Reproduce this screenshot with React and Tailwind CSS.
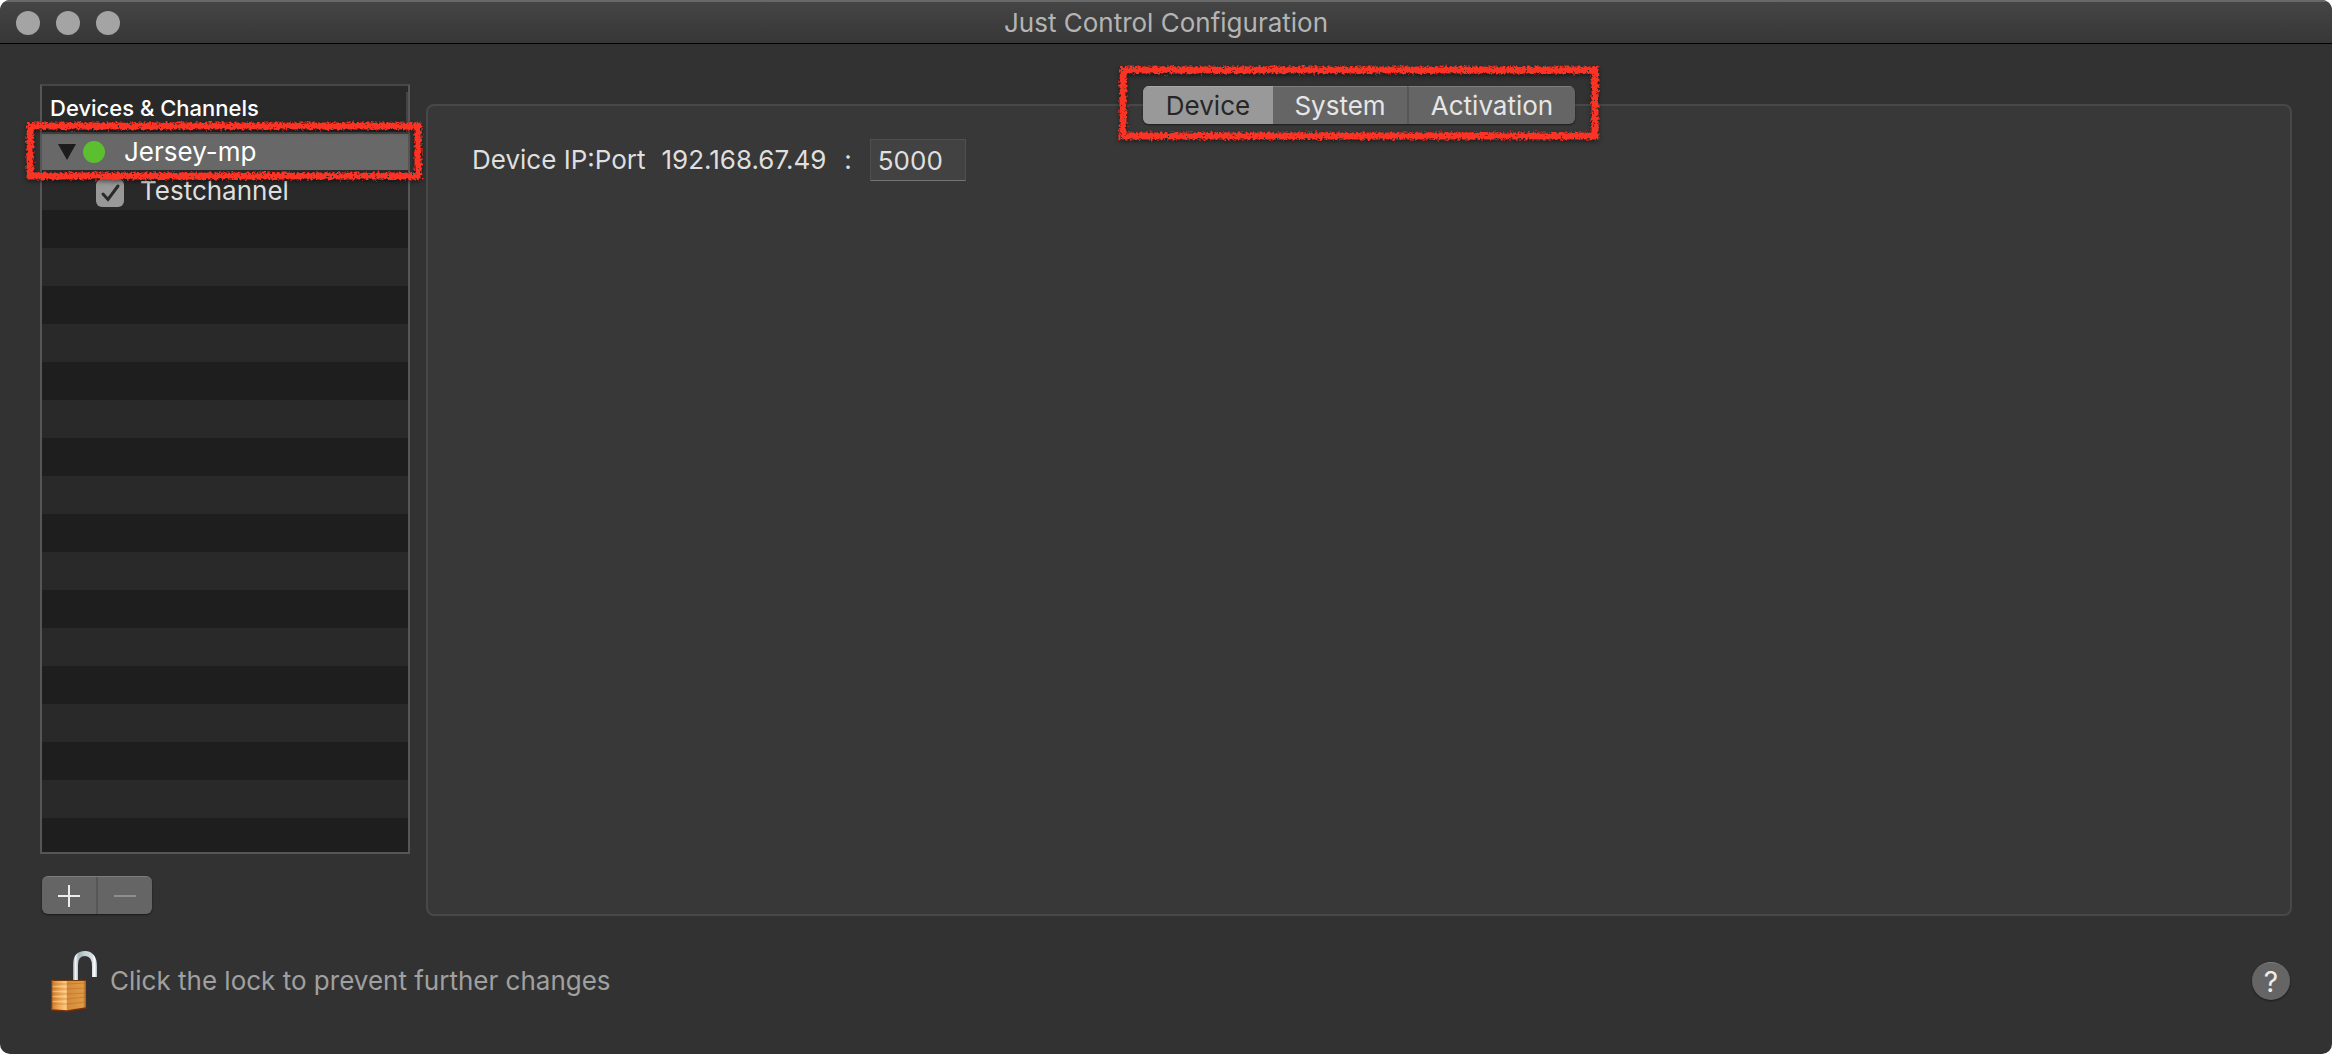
import { useState } from 'react';
import clsx from 'clsx';

const TABS = [
    { name: 'Device', width: 'w-[130px]' },
    { name: 'System', width: 'w-[134px]' },
    { name: 'Activation', width: 'w-[168px] border-l-2 border-l-[#565656]' },
];

const EMPTY_ROWS = Array.from({ length: 17 }, (_, i) => i);

// Rough crayon outline laid over whatever its parent holds
const Marker = ({ id, className }) => (
    <svg className={clsx('pointer-events-none absolute z-20 overflow-visible drop-shadow-[0_2px_2px_rgba(0,0,0,0.5)]', className)} aria-hidden="true">
        <defs>
            <filter id={id} filterUnits="userSpaceOnUse" x="-12" y="-12" width="520" height="120" colorInterpolationFilters="sRGB">
                <feTurbulence type="fractalNoise" baseFrequency="0.4" numOctaves="2" seed="4" result="noise" />
                <feDisplacementMap in="SourceGraphic" in2="noise" scale="6" xChannelSelector="R" yChannelSelector="G" result="rough" />
                <feColorMatrix in="noise" type="matrix" values="0 0 0 0 0  0 0 0 0 0  0 0 0 0 0  0 0 -10 0 8" result="holes" />
                <feComposite in="rough" in2="holes" operator="in" />
            </filter>
        </defs>
        <rect width="100%" height="100%" fill="none" stroke="#fb3324" strokeWidth="7" filter={`url(#${id})`} />
    </svg>
);

const LockIcon = () => (
    <svg className="h-[62px] w-12" viewBox="0 0 48 62" aria-hidden="true">
        <defs>
            <linearGradient id="brassFront">
                <stop offset="0" stopColor="#cf8030" />
                <stop offset="0.4" stopColor="#eda552" />
                <stop offset="0.9" stopColor="#fbc880" />
                <stop offset="1" stopColor="#f0b060" />
            </linearGradient>
            <linearGradient id="brassSide">
                <stop offset="0" stopColor="#d48a3a" />
                <stop offset="0.85" stopColor="#e09a45" />
                <stop offset="1" stopColor="#a45c1c" />
            </linearGradient>
            <linearGradient id="steel" gradientUnits="userSpaceOnUse" x1="23" x2="47" y1="0" y2="0">
                <stop offset="0" stopColor="#8b979d" />
                <stop offset="0.1" stopColor="#f6f9fa" />
                <stop offset="0.24" stopColor="#a5b3ba" />
                <stop offset="0.5" stopColor="#c6d1d6" />
                <stop offset="0.8" stopColor="#d3dce0" />
                <stop offset="0.9" stopColor="#ffffff" />
                <stop offset="1" stopColor="#a7b4bb" />
            </linearGradient>
        </defs>
        <path d="M25.500 31V15C25.500 7 29 3.500 35 3.500S44.500 8 44.500 16V27" fill="none" stroke="url(#steel)" strokeWidth="5" />
        <path d="M2 30H17V61L2 60Z" fill="url(#brassFront)" />
        <path d="M17 30H36V58L17 61Z" fill="url(#brassSide)" />
        <path d="M2 34H17L36 33M2 39H17L36 38M2 44H17L36 43M2 49H17L36 47M2 54H17L36 52" fill="none" stroke="#a8601d" strokeOpacity="0.4" />
        <path d="M2 36.500H17M2 41.500H17M2 46.500H17M2 51.500H17" stroke="#ffd998" strokeOpacity="0.5" />
        <path d="M2 30.500H36" stroke="#6e3a0c" />
        <path d="M2 60L17 61L36 58" fill="none" stroke="#7c2f08" strokeWidth="1.500" />
        <path d="M2 30V60" stroke="#a3581a" />
    </svg>
);

const App = () => {
    const [tab, setTab] = useState('Device');
    const [port, setPort] = useState('5000');
    const [enabled, setEnabled] = useState(true);

    return (
        <div className="min-h-screen bg-white font-['Inter','Liberation_Sans',sans-serif]">
            <div className="flex min-h-screen flex-col overflow-hidden rounded-[10px] bg-[#323232] text-[26px] leading-[38px] text-[#dfdfdf]">
                <header className="grid h-11 grid-cols-[1fr_auto_1fr] items-center border-t-2 border-b border-t-[#686868] border-b-black bg-linear-to-b from-[#454545] to-[#373737] px-4">
                    <div className="flex gap-4">
                        <button aria-label="Close" className="size-6 rounded-full bg-[#a4a4a4]" />
                        <button aria-label="Minimize" className="size-6 rounded-full bg-[#a4a4a4]" />
                        <button aria-label="Zoom" className="size-6 rounded-full bg-[#a4a4a4]" />
                    </div>
                    <h1 className="text-[#b4b4b4]">Just Control Configuration</h1>
                </header>

                <main className="flex flex-1 gap-4 px-10 pt-10">
                    <aside className="w-[370px] shrink-0">
                        <div className="border-2 border-[#565656] border-t-[#464646] bg-[#292929]">
                            <div className="flex h-12 justify-between border-b-2 border-[#454545]">
                                <h2 className="pt-[3px] pl-2 text-[22px] font-medium text-white">Devices &amp; Channels</h2>
                                <span className="mt-1.5 w-0.5 bg-[#444444]" />
                            </div>
                            <ul>
                                <li className="relative mb-0.5 flex h-9 items-center bg-[#686868] pl-4 text-white">
                                    <button aria-label="Collapse Jersey-mp">
                                        <svg className="h-4 w-[18px]" viewBox="0 0 18 16" aria-hidden="true">
                                            <path d="M0 0H18L9 16Z" fill="#1c1c1c" />
                                        </svg>
                                    </button>
                                    <span className="ml-[7px] size-[22px] rounded-full bg-[#5bbf30]" />
                                    <span className="ml-[19px]">Jersey-mp</span>
                                    <Marker id="markDevice" className="-top-2 -left-3 h-[50px] w-[388px]" />
                                </li>
                                <li>
                                    <label className="flex h-[38px] items-center pl-[54px]">
                                        <span className="mt-1 grid size-7">
                                            <input
                                                type="checkbox"
                                                className="col-start-1 row-start-1 size-7 appearance-none rounded-md bg-[#989898]"
                                                checked={enabled}
                                                onChange={() => setEnabled(!enabled)}
                                            />
                                            {enabled && (
                                                <svg className="pointer-events-none z-10 col-start-1 row-start-1 size-7" viewBox="0 0 28 28" aria-hidden="true">
                                                    <path d="M7 15L12 20.500L22 7" fill="none" stroke="#2a2a2a" strokeWidth="3" strokeLinecap="round" />
                                                </svg>
                                            )}
                                        </span>
                                        <span className="ml-4">Testchannel</span>
                                    </label>
                                </li>
                                {EMPTY_ROWS.map((i) => (
                                    <li key={i} className="h-[38px] odd:bg-[#1e1e1e] last:h-[34px]" />
                                ))}
                            </ul>
                        </div>
                        <div className="mt-[22px] ml-0.5 inline-flex overflow-hidden rounded-md border-t border-[#7e7e7e] bg-[#656565] align-top shadow-[0_1px_2px_rgba(0,0,0,0.5)]">
                            <button aria-label="Add device" className="grid h-[37px] w-[54px] place-items-center">
                                <svg className="size-[22px]" viewBox="0 0 22 22" aria-hidden="true">
                                    <path d="M0 11H22M11 0V22" stroke="#ececec" strokeWidth="2" />
                                </svg>
                            </button>
                            <button aria-label="Remove device" className="grid h-[37px] w-[56px] place-items-center border-l-2 border-[#565656]" disabled>
                                <svg className="size-[22px]" viewBox="0 0 22 22" aria-hidden="true">
                                    <path d="M0 11H22" stroke="#8e8e8e" strokeWidth="2" />
                                </svg>
                            </button>
                        </div>
                    </aside>

                    <section className="flex flex-1 flex-col pt-0.5">
                        <div className="relative z-10 self-center">
                            <div className="flex overflow-hidden rounded-md bg-[#656565] shadow-[0_1px_2px_rgba(0,0,0,0.5)]" role="tablist">
                                {TABS.map((t) => (
                                    <button
                                        key={t.name}
                                        role="tab"
                                        aria-selected={tab === t.name}
                                        onClick={() => setTab(t.name)}
                                        className={clsx('h-[38px] border-t leading-[36px]', t.width, tab === t.name ? 'border-t-[#a8a8a8] bg-[#999999] text-[#262626]' : 'border-t-[#7e7e7e] text-[#e6e6e6]')}
                                    >
                                        {t.name}
                                    </button>
                                ))}
                            </div>
                            <Marker id="markTabs" className="-top-4 -left-5 h-[66px] w-[472px]" />
                        </div>
                        <div className="-mt-5 flex-1 rounded-lg border-2 border-[#484848] bg-[#383838] px-11 py-[33px]">
                            <div className="flex items-center gap-4">
                                <label htmlFor="port">Device IP:Port</label>
                                <span>192.168.67.49</span>
                                <span className="px-0.5">:</span>
                                <input
                                    id="port"
                                    className="h-[42px] w-24 border border-[#4f4f4f] border-b-[#747474] bg-[#424242] px-[7px] outline-none"
                                    value={port}
                                    onChange={(e) => setPort(e.target.value)}
                                />
                            </div>
                        </div>
                    </section>
                </main>

                <footer className="flex items-center justify-between pt-[34px] pr-[42px] pb-[42px] pl-[50px]">
                    <button className="flex items-center gap-3 text-[#a0a0a0]">
                        <LockIcon />
                        Click the lock to prevent further changes
                    </button>
                    <button aria-label="Help" className="size-[38px] rounded-full border-t border-[#7e7e7e] bg-[#656565] text-[28px] leading-[36px] text-[#ececec] shadow-[0_1px_2px_rgba(0,0,0,0.5)]">?</button>
                </footer>
            </div>
        </div>
    );
};

export default App;
